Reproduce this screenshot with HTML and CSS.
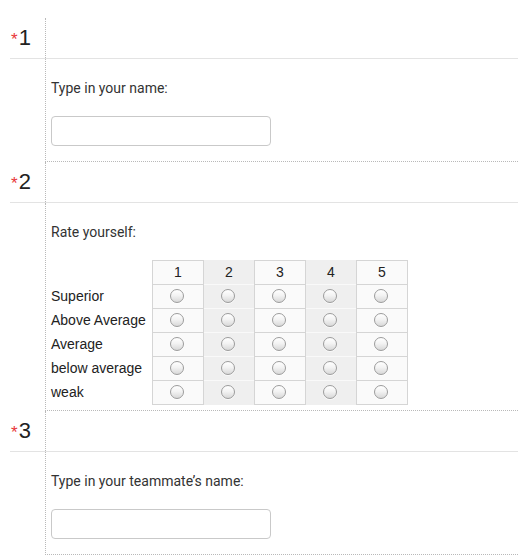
FILE: index.html
```html
<!DOCTYPE html>
<html lang="en">
<head>
<meta charset="utf-8">
<title>Survey</title>
<link rel="stylesheet" href="styles.css">
</head>
<body>
<div class="survey">

  <div class="q-head">
    <div class="q-num"><span class="req">*</span>1</div>
    <div class="q-head-main"></div>
  </div>
  <div class="q-body">
    <div class="q-gutter"></div>
    <div class="q-main">
      <label class="q-label" for="name">Type in your name:</label>
      <input class="q-input" id="name" type="text">
    </div>
  </div>

  <div class="q-head">
    <div class="q-num"><span class="req">*</span>2</div>
    <div class="q-head-main"></div>
  </div>
  <div class="q-body">
    <div class="q-gutter"></div>
    <div class="q-main q-main-matrix">
      <div class="q-label q-label-matrix">Rate yourself:</div>
      <div class="matrix">
        <div class="m-label"></div>
        <div class="m-cell m-odd m-top">1</div>
        <div class="m-cell m-even m-top">2</div>
        <div class="m-cell m-odd m-top">3</div>
        <div class="m-cell m-even m-top">4</div>
        <div class="m-cell m-odd m-top">5</div>

        <div class="m-label">Superior</div>
        <div class="m-cell m-odd"><input class="radio" type="radio" name="r1"></div>
        <div class="m-cell m-even"><input class="radio" type="radio" name="r1"></div>
        <div class="m-cell m-odd"><input class="radio" type="radio" name="r1"></div>
        <div class="m-cell m-even"><input class="radio" type="radio" name="r1"></div>
        <div class="m-cell m-odd"><input class="radio" type="radio" name="r1"></div>

        <div class="m-label">Above Average</div>
        <div class="m-cell m-odd"><input class="radio" type="radio" name="r2"></div>
        <div class="m-cell m-even"><input class="radio" type="radio" name="r2"></div>
        <div class="m-cell m-odd"><input class="radio" type="radio" name="r2"></div>
        <div class="m-cell m-even"><input class="radio" type="radio" name="r2"></div>
        <div class="m-cell m-odd"><input class="radio" type="radio" name="r2"></div>

        <div class="m-label">Average</div>
        <div class="m-cell m-odd"><input class="radio" type="radio" name="r3"></div>
        <div class="m-cell m-even"><input class="radio" type="radio" name="r3"></div>
        <div class="m-cell m-odd"><input class="radio" type="radio" name="r3"></div>
        <div class="m-cell m-even"><input class="radio" type="radio" name="r3"></div>
        <div class="m-cell m-odd"><input class="radio" type="radio" name="r3"></div>

        <div class="m-label">below average</div>
        <div class="m-cell m-odd"><input class="radio" type="radio" name="r4"></div>
        <div class="m-cell m-even"><input class="radio" type="radio" name="r4"></div>
        <div class="m-cell m-odd"><input class="radio" type="radio" name="r4"></div>
        <div class="m-cell m-even"><input class="radio" type="radio" name="r4"></div>
        <div class="m-cell m-odd"><input class="radio" type="radio" name="r4"></div>

        <div class="m-label">weak</div>
        <div class="m-cell m-odd m-last"><input class="radio" type="radio" name="r5"></div>
        <div class="m-cell m-even m-last"><input class="radio" type="radio" name="r5"></div>
        <div class="m-cell m-odd m-last"><input class="radio" type="radio" name="r5"></div>
        <div class="m-cell m-even m-last"><input class="radio" type="radio" name="r5"></div>
        <div class="m-cell m-odd m-last"><input class="radio" type="radio" name="r5"></div>
      </div>
    </div>
  </div>

  <div class="q-head">
    <div class="q-num"><span class="req">*</span>3</div>
    <div class="q-head-main"></div>
  </div>
  <div class="q-body">
    <div class="q-gutter"></div>
    <div class="q-main">
      <label class="q-label" for="mate">Type in your teammate’s name:</label>
      <input class="q-input" id="mate" type="text">
    </div>
  </div>

</div>
</body>
</html>
```

FILE: styles.css
```css
html, body {
  margin: 0;
  padding: 0;
  background: #fff;
}

body {
  font-family: "Liberation Sans", Arial, sans-serif;
  color: #222;
}

.survey {
  margin: 18px 0 0 10px;
}

.q-head {
  display: flex;
  height: 40px;
  border-bottom: 1px solid #e3e3e3;
}

.q-num {
  width: 35px;
  display: flex;
  align-items: center;
  padding-left: 1px;
  box-sizing: border-box;
  font-size: 22px;
  line-height: 1;
  color: #222;
}

.req {
  color: #e8363a;
  font-size: 17px;
  margin-right: 1px;
  align-self: center;
  line-height: 1;
  padding-top: 3px;
}

.q-head-main {
  flex: 1;
  border-left: 1px dotted #b9b9b9;
}

.q-body {
  display: flex;
}

.q-gutter {
  width: 35px;
  flex: none;
}

.q-main {
  flex: 1;
  display: flex;
  flex-direction: column;
  align-items: flex-start;
  border-left: 1px dotted #b9b9b9;
  border-bottom: 1px dotted #b9b9b9;
  padding: 19px 0 15px 5px;
}

.q-main-matrix {
  padding-bottom: 5px;
}

.q-label {
  display: block;
  font-family: Roboto, "Liberation Sans", sans-serif;
  font-size: 14px;
  line-height: 20px;
  color: #333;
  margin-bottom: 18px;
}

.q-input {
  box-sizing: border-box;
  width: 220px;
  height: 30px;
  margin: 0;
  border: 1px solid #c9c9c9;
  border-radius: 4px;
  background: #fff;
  font: 14px "Liberation Sans", sans-serif;
  padding: 4px 6px;
}

.matrix {
  display: grid;
  grid-template-columns: 101px 52px 50px 52px 50px 52px;
  grid-template-rows: 25px repeat(5, 24px);
  font-size: 14px;
  color: #222;
}

.m-label {
  display: flex;
  align-items: center;
  white-space: nowrap;
  line-height: 1;
  padding-bottom: 2px;
}

.m-cell {
  box-sizing: border-box;
  display: flex;
  align-items: center;
  justify-content: center;
  line-height: 1;
}

.m-odd {
  background: #fafafa;
  border-left: 1px solid #d5d5d5;
  border-right: 1px solid #d5d5d5;
  border-bottom: 1px solid #d5d5d5;
}

.m-odd.m-top {
  border-top: 1px solid #d5d5d5;
}

.m-even {
  background: #efefef;
  border-bottom: 1px solid #f9f9f9;
}

.m-even.m-last {
  border-bottom: 1px solid #efefef;
}

.m-top {
  padding-bottom: 1px;
  color: #222;
}

.radio {
  -webkit-appearance: none;
  appearance: none;
  box-sizing: border-box;
  width: 14px;
  height: 14px;
  margin: 0 3px 2px 0;
  border: 1px solid #9c9c9c;
  border-radius: 50%;
  background: linear-gradient(#ffffff, #f3f3f3 45%, #d8d8d8);
  box-shadow: 0 1px 0 rgba(255, 255, 255, 0.6);
}
```
